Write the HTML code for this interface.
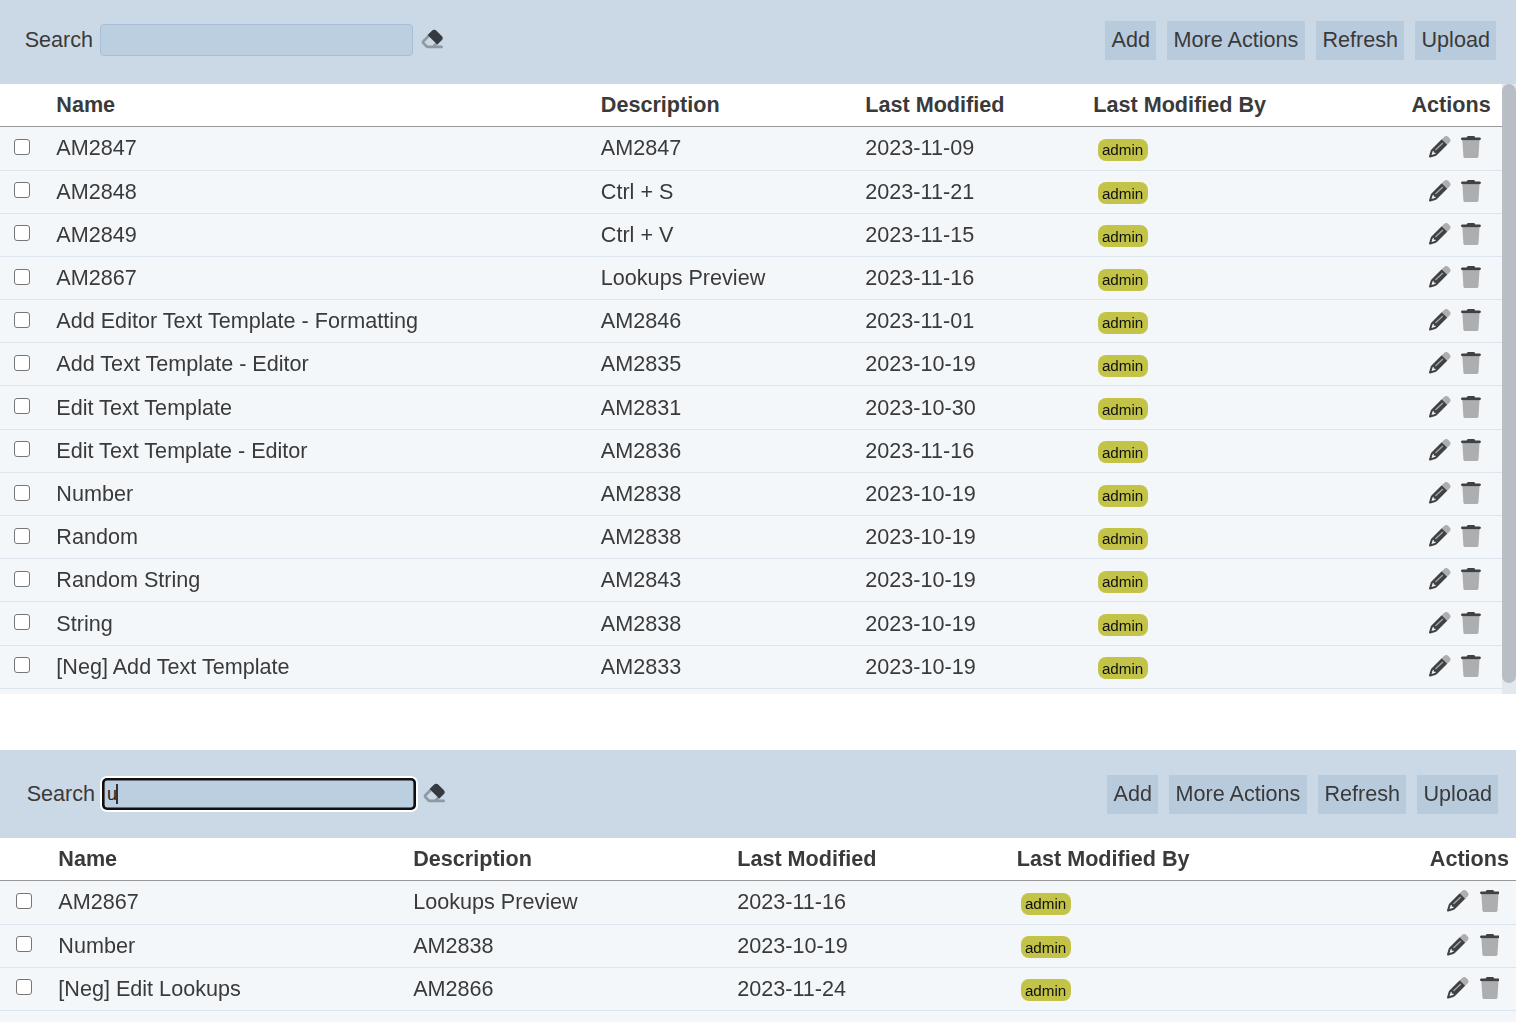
<!DOCTYPE html>
<html><head><meta charset="utf-8"><title>Templates</title>
<style>
html,body{margin:0;padding:0;}
body{width:1516px;height:1022px;overflow:hidden;position:relative;background:#fff;font-family:"Liberation Sans",sans-serif;}
.t{position:absolute;white-space:nowrap;line-height:30px;}
</style></head><body>
<div id="p1"><div style="position:absolute;left:0px;top:0px;width:1516px;height:84px;background:#cbd9e6"></div><div class="t" style="left:24.70px;top:24.52px;font-size:21.6px;color:#3a3a3a;">Search</div><div style="position:absolute;left:100px;top:24px;width:313px;height:32px;box-sizing:border-box;background:#bccfe1;border:1px solid #a6bfd9;border-radius:4px"></div><svg viewBox="0 0 576 512" width="24.3" height="21.6" style="position:absolute;left:419.9px;top:28.2px">
<path fill="#343a40" fill-opacity="0.4" fill-rule="evenodd" d="M290.7 57.4L57.4 290.7c-25 25-25 65.5 0 90.5l80 80c12 12 28.3 18.7 45.3 18.7H288h9.4H512c17.7 0 32-14.3 32-32s-14.3-32-32-32H387.9L518.6 285.3c25-25 25-65.5 0-90.5L381.3 57.4c-25-25-65.5-25-90.5 0zM297.4 416H288l-105.4 0-80-80L227.3 211.3 364.7 348.7 297.4 416z"/>
<path fill="#343a40" d="M182 166L290.7 57.4C315.7 32.4 356.2 32.4 381.3 57.4L518.6 194.8C543.6 219.8 543.6 260.3 518.6 285.3L410 394Z"/>
</svg><div style="position:absolute;left:1105px;top:21px;width:51px;height:39px;background:#b8cbdd"></div><div class="t" style="left:1111.50px;top:24.52px;font-size:21.6px;color:#3a3a3a;">Add</div><div style="position:absolute;left:1167px;top:21px;width:138px;height:39px;background:#b8cbdd"></div><div class="t" style="left:1173.50px;top:24.52px;font-size:21.6px;color:#3a3a3a;">More Actions</div><div style="position:absolute;left:1316px;top:21px;width:88px;height:39px;background:#b8cbdd"></div><div class="t" style="left:1322.50px;top:24.52px;font-size:21.6px;color:#3a3a3a;">Refresh</div><div style="position:absolute;left:1415px;top:21px;width:81px;height:39px;background:#b8cbdd"></div><div class="t" style="left:1421.50px;top:24.52px;font-size:21.6px;color:#3a3a3a;">Upload</div><div style="position:absolute;left:0px;top:126px;width:1502px;height:1px;background:#999999"></div><div class="t" style="left:56.30px;top:89.52px;font-size:21.6px;font-weight:bold;color:#3a3a3a;">Name</div><div class="t" style="left:600.80px;top:89.52px;font-size:21.6px;font-weight:bold;color:#3a3a3a;">Description</div><div class="t" style="left:865.30px;top:89.52px;font-size:21.6px;font-weight:bold;color:#3a3a3a;">Last Modified</div><div class="t" style="left:1093.30px;top:89.52px;font-size:21.6px;font-weight:bold;color:#3a3a3a;">Last Modified By</div><div class="t" style="right:25.30px;top:89.52px;font-size:21.6px;font-weight:bold;color:#3a3a3a">Actions</div><div style="position:absolute;left:0;top:0;width:1516px;height:1022px;will-change:transform"><div style="position:absolute;left:0px;top:127px;width:1502px;height:43px;background:#f3f7fa"></div><div style="position:absolute;left:0px;top:170px;width:1502px;height:1px;background:#dde6ee"></div><div style="position:absolute;left:14px;top:138.90px;width:16px;height:16px;box-sizing:border-box;border:1.4px solid #767676;border-radius:3px;background:#fff"></div><div class="t" style="left:56.30px;top:132.52px;font-size:21.6px;color:#3a3a3a;">AM2847</div><div class="t" style="left:600.80px;top:132.52px;font-size:21.6px;color:#3a3a3a;">AM2847</div><div class="t" style="left:865.30px;top:132.52px;font-size:21.6px;color:#3a3a3a;">2023-11-09</div><div style="position:absolute;left:1098.0px;top:138.90px;width:50px;height:22px;border-radius:8px;background:#c3c447"></div><div class="t" style="left:1101.90px;top:134.73px;font-size:15.2px;color:#111;">admin</div><svg viewBox="0 0 512 512" width="21.6" height="21.6" style="position:absolute;left:1429.0px;top:136px">
<path fill="#404142" fill-rule="evenodd" d="M432 207L188.5 452.9c-10.4 10.4-23.3 18-37.4 22.2L30.8 510.5c-8.4 2.5-17.5 .2-23.7-6.1s-8.5-15.3-6.1-23.7L36.4 360.3c4.2-14.1 11.8-27 22.2-37.4L302 79Z M160 399.4l-9.1 22.7c-4 3.1-8.5 5.4-13.3 6.9L59.4 452l23-78.1c1.4-4.9 3.8-9.4 6.9-13.3l22.7-9.1v32c0 8.8 7.2 16 16 16h32z"/>
<path fill="#404142" fill-opacity="0.4" d="M362.7 18.7L302 79L432 207L492.6 148.6c25-25 25-65.5 0-90.5L453.3 18.7c-25-25-65.5-25-90.5 0z"/>
<path d="M328 166L152 332" stroke="#ffffff" stroke-opacity="0.55" stroke-width="30" stroke-linecap="butt"/>
</svg><svg viewBox="0 0 448 512" width="19.9" height="22.1" preserveAspectRatio="none" style="position:absolute;left:1461.3px;top:136px">
<path fill="#404142" d="M163.8 0H284.2c12.1 0 23.2 6.8 28.6 17.7L320 32h96c17.7 0 32 14.3 32 32s-14.3 32-32 32H32C14.3 96 0 81.7 0 64S14.3 32 32 32h96l7.2-14.3C140.6 6.8 151.7 0 163.8 0z"/>
<path fill="#404142" fill-opacity="0.4" d="M32 96H416L394.8 467c-1.6 25.3-22.6 45-47.9 45H101.1c-25.3 0-46.3-19.7-47.9-45L32 96z"/>
</svg><div style="position:absolute;left:0px;top:171px;width:1502px;height:42px;background:#f3f7fa"></div><div style="position:absolute;left:0px;top:213px;width:1502px;height:1px;background:#dde6ee"></div><div style="position:absolute;left:14px;top:182.10px;width:16px;height:16px;box-sizing:border-box;border:1.4px solid #767676;border-radius:3px;background:#fff"></div><div class="t" style="left:56.30px;top:176.52px;font-size:21.6px;color:#3a3a3a;">AM2848</div><div class="t" style="left:600.80px;top:176.52px;font-size:21.6px;color:#3a3a3a;">Ctrl + S</div><div class="t" style="left:865.30px;top:176.52px;font-size:21.6px;color:#3a3a3a;">2023-11-21</div><div style="position:absolute;left:1098.0px;top:182.10px;width:50px;height:22px;border-radius:8px;background:#c3c447"></div><div class="t" style="left:1101.90px;top:178.73px;font-size:15.2px;color:#111;">admin</div><svg viewBox="0 0 512 512" width="21.6" height="21.6" style="position:absolute;left:1429.0px;top:180px">
<path fill="#404142" fill-rule="evenodd" d="M432 207L188.5 452.9c-10.4 10.4-23.3 18-37.4 22.2L30.8 510.5c-8.4 2.5-17.5 .2-23.7-6.1s-8.5-15.3-6.1-23.7L36.4 360.3c4.2-14.1 11.8-27 22.2-37.4L302 79Z M160 399.4l-9.1 22.7c-4 3.1-8.5 5.4-13.3 6.9L59.4 452l23-78.1c1.4-4.9 3.8-9.4 6.9-13.3l22.7-9.1v32c0 8.8 7.2 16 16 16h32z"/>
<path fill="#404142" fill-opacity="0.4" d="M362.7 18.7L302 79L432 207L492.6 148.6c25-25 25-65.5 0-90.5L453.3 18.7c-25-25-65.5-25-90.5 0z"/>
<path d="M328 166L152 332" stroke="#ffffff" stroke-opacity="0.55" stroke-width="30" stroke-linecap="butt"/>
</svg><svg viewBox="0 0 448 512" width="19.9" height="22.1" preserveAspectRatio="none" style="position:absolute;left:1461.3px;top:180px">
<path fill="#404142" d="M163.8 0H284.2c12.1 0 23.2 6.8 28.6 17.7L320 32h96c17.7 0 32 14.3 32 32s-14.3 32-32 32H32C14.3 96 0 81.7 0 64S14.3 32 32 32h96l7.2-14.3C140.6 6.8 151.7 0 163.8 0z"/>
<path fill="#404142" fill-opacity="0.4" d="M32 96H416L394.8 467c-1.6 25.3-22.6 45-47.9 45H101.1c-25.3 0-46.3-19.7-47.9-45L32 96z"/>
</svg><div style="position:absolute;left:0px;top:214px;width:1502px;height:42px;background:#f3f7fa"></div><div style="position:absolute;left:0px;top:256px;width:1502px;height:1px;background:#dde6ee"></div><div style="position:absolute;left:14px;top:225.30px;width:16px;height:16px;box-sizing:border-box;border:1.4px solid #767676;border-radius:3px;background:#fff"></div><div class="t" style="left:56.30px;top:219.52px;font-size:21.6px;color:#3a3a3a;">AM2849</div><div class="t" style="left:600.80px;top:219.52px;font-size:21.6px;color:#3a3a3a;">Ctrl + V</div><div class="t" style="left:865.30px;top:219.52px;font-size:21.6px;color:#3a3a3a;">2023-11-15</div><div style="position:absolute;left:1098.0px;top:225.30px;width:50px;height:22px;border-radius:8px;background:#c3c447"></div><div class="t" style="left:1101.90px;top:221.73px;font-size:15.2px;color:#111;">admin</div><svg viewBox="0 0 512 512" width="21.6" height="21.6" style="position:absolute;left:1429.0px;top:223px">
<path fill="#404142" fill-rule="evenodd" d="M432 207L188.5 452.9c-10.4 10.4-23.3 18-37.4 22.2L30.8 510.5c-8.4 2.5-17.5 .2-23.7-6.1s-8.5-15.3-6.1-23.7L36.4 360.3c4.2-14.1 11.8-27 22.2-37.4L302 79Z M160 399.4l-9.1 22.7c-4 3.1-8.5 5.4-13.3 6.9L59.4 452l23-78.1c1.4-4.9 3.8-9.4 6.9-13.3l22.7-9.1v32c0 8.8 7.2 16 16 16h32z"/>
<path fill="#404142" fill-opacity="0.4" d="M362.7 18.7L302 79L432 207L492.6 148.6c25-25 25-65.5 0-90.5L453.3 18.7c-25-25-65.5-25-90.5 0z"/>
<path d="M328 166L152 332" stroke="#ffffff" stroke-opacity="0.55" stroke-width="30" stroke-linecap="butt"/>
</svg><svg viewBox="0 0 448 512" width="19.9" height="22.1" preserveAspectRatio="none" style="position:absolute;left:1461.3px;top:223px">
<path fill="#404142" d="M163.8 0H284.2c12.1 0 23.2 6.8 28.6 17.7L320 32h96c17.7 0 32 14.3 32 32s-14.3 32-32 32H32C14.3 96 0 81.7 0 64S14.3 32 32 32h96l7.2-14.3C140.6 6.8 151.7 0 163.8 0z"/>
<path fill="#404142" fill-opacity="0.4" d="M32 96H416L394.8 467c-1.6 25.3-22.6 45-47.9 45H101.1c-25.3 0-46.3-19.7-47.9-45L32 96z"/>
</svg><div style="position:absolute;left:0px;top:257px;width:1502px;height:42px;background:#f3f7fa"></div><div style="position:absolute;left:0px;top:299px;width:1502px;height:1px;background:#dde6ee"></div><div style="position:absolute;left:14px;top:268.50px;width:16px;height:16px;box-sizing:border-box;border:1.4px solid #767676;border-radius:3px;background:#fff"></div><div class="t" style="left:56.30px;top:262.52px;font-size:21.6px;color:#3a3a3a;">AM2867</div><div class="t" style="left:600.80px;top:262.52px;font-size:21.6px;color:#3a3a3a;">Lookups Preview</div><div class="t" style="left:865.30px;top:262.52px;font-size:21.6px;color:#3a3a3a;">2023-11-16</div><div style="position:absolute;left:1098.0px;top:268.50px;width:50px;height:22px;border-radius:8px;background:#c3c447"></div><div class="t" style="left:1101.90px;top:264.73px;font-size:15.2px;color:#111;">admin</div><svg viewBox="0 0 512 512" width="21.6" height="21.6" style="position:absolute;left:1429.0px;top:266px">
<path fill="#404142" fill-rule="evenodd" d="M432 207L188.5 452.9c-10.4 10.4-23.3 18-37.4 22.2L30.8 510.5c-8.4 2.5-17.5 .2-23.7-6.1s-8.5-15.3-6.1-23.7L36.4 360.3c4.2-14.1 11.8-27 22.2-37.4L302 79Z M160 399.4l-9.1 22.7c-4 3.1-8.5 5.4-13.3 6.9L59.4 452l23-78.1c1.4-4.9 3.8-9.4 6.9-13.3l22.7-9.1v32c0 8.8 7.2 16 16 16h32z"/>
<path fill="#404142" fill-opacity="0.4" d="M362.7 18.7L302 79L432 207L492.6 148.6c25-25 25-65.5 0-90.5L453.3 18.7c-25-25-65.5-25-90.5 0z"/>
<path d="M328 166L152 332" stroke="#ffffff" stroke-opacity="0.55" stroke-width="30" stroke-linecap="butt"/>
</svg><svg viewBox="0 0 448 512" width="19.9" height="22.1" preserveAspectRatio="none" style="position:absolute;left:1461.3px;top:266px">
<path fill="#404142" d="M163.8 0H284.2c12.1 0 23.2 6.8 28.6 17.7L320 32h96c17.7 0 32 14.3 32 32s-14.3 32-32 32H32C14.3 96 0 81.7 0 64S14.3 32 32 32h96l7.2-14.3C140.6 6.8 151.7 0 163.8 0z"/>
<path fill="#404142" fill-opacity="0.4" d="M32 96H416L394.8 467c-1.6 25.3-22.6 45-47.9 45H101.1c-25.3 0-46.3-19.7-47.9-45L32 96z"/>
</svg><div style="position:absolute;left:0px;top:300px;width:1502px;height:42px;background:#f3f7fa"></div><div style="position:absolute;left:0px;top:342px;width:1502px;height:1px;background:#dde6ee"></div><div style="position:absolute;left:14px;top:311.70px;width:16px;height:16px;box-sizing:border-box;border:1.4px solid #767676;border-radius:3px;background:#fff"></div><div class="t" style="left:56.30px;top:305.52px;font-size:21.6px;color:#3a3a3a;">Add Editor Text Template - Formatting</div><div class="t" style="left:600.80px;top:305.52px;font-size:21.6px;color:#3a3a3a;">AM2846</div><div class="t" style="left:865.30px;top:305.52px;font-size:21.6px;color:#3a3a3a;">2023-11-01</div><div style="position:absolute;left:1098.0px;top:311.70px;width:50px;height:22px;border-radius:8px;background:#c3c447"></div><div class="t" style="left:1101.90px;top:307.73px;font-size:15.2px;color:#111;">admin</div><svg viewBox="0 0 512 512" width="21.6" height="21.6" style="position:absolute;left:1429.0px;top:309px">
<path fill="#404142" fill-rule="evenodd" d="M432 207L188.5 452.9c-10.4 10.4-23.3 18-37.4 22.2L30.8 510.5c-8.4 2.5-17.5 .2-23.7-6.1s-8.5-15.3-6.1-23.7L36.4 360.3c4.2-14.1 11.8-27 22.2-37.4L302 79Z M160 399.4l-9.1 22.7c-4 3.1-8.5 5.4-13.3 6.9L59.4 452l23-78.1c1.4-4.9 3.8-9.4 6.9-13.3l22.7-9.1v32c0 8.8 7.2 16 16 16h32z"/>
<path fill="#404142" fill-opacity="0.4" d="M362.7 18.7L302 79L432 207L492.6 148.6c25-25 25-65.5 0-90.5L453.3 18.7c-25-25-65.5-25-90.5 0z"/>
<path d="M328 166L152 332" stroke="#ffffff" stroke-opacity="0.55" stroke-width="30" stroke-linecap="butt"/>
</svg><svg viewBox="0 0 448 512" width="19.9" height="22.1" preserveAspectRatio="none" style="position:absolute;left:1461.3px;top:309px">
<path fill="#404142" d="M163.8 0H284.2c12.1 0 23.2 6.8 28.6 17.7L320 32h96c17.7 0 32 14.3 32 32s-14.3 32-32 32H32C14.3 96 0 81.7 0 64S14.3 32 32 32h96l7.2-14.3C140.6 6.8 151.7 0 163.8 0z"/>
<path fill="#404142" fill-opacity="0.4" d="M32 96H416L394.8 467c-1.6 25.3-22.6 45-47.9 45H101.1c-25.3 0-46.3-19.7-47.9-45L32 96z"/>
</svg><div style="position:absolute;left:0px;top:343px;width:1502px;height:42px;background:#f3f7fa"></div><div style="position:absolute;left:0px;top:385px;width:1502px;height:1px;background:#dde6ee"></div><div style="position:absolute;left:14px;top:354.90px;width:16px;height:16px;box-sizing:border-box;border:1.4px solid #767676;border-radius:3px;background:#fff"></div><div class="t" style="left:56.30px;top:348.52px;font-size:21.6px;color:#3a3a3a;">Add Text Template - Editor</div><div class="t" style="left:600.80px;top:348.52px;font-size:21.6px;color:#3a3a3a;">AM2835</div><div class="t" style="left:865.30px;top:348.52px;font-size:21.6px;color:#3a3a3a;">2023-10-19</div><div style="position:absolute;left:1098.0px;top:354.90px;width:50px;height:22px;border-radius:8px;background:#c3c447"></div><div class="t" style="left:1101.90px;top:350.73px;font-size:15.2px;color:#111;">admin</div><svg viewBox="0 0 512 512" width="21.6" height="21.6" style="position:absolute;left:1429.0px;top:352px">
<path fill="#404142" fill-rule="evenodd" d="M432 207L188.5 452.9c-10.4 10.4-23.3 18-37.4 22.2L30.8 510.5c-8.4 2.5-17.5 .2-23.7-6.1s-8.5-15.3-6.1-23.7L36.4 360.3c4.2-14.1 11.8-27 22.2-37.4L302 79Z M160 399.4l-9.1 22.7c-4 3.1-8.5 5.4-13.3 6.9L59.4 452l23-78.1c1.4-4.9 3.8-9.4 6.9-13.3l22.7-9.1v32c0 8.8 7.2 16 16 16h32z"/>
<path fill="#404142" fill-opacity="0.4" d="M362.7 18.7L302 79L432 207L492.6 148.6c25-25 25-65.5 0-90.5L453.3 18.7c-25-25-65.5-25-90.5 0z"/>
<path d="M328 166L152 332" stroke="#ffffff" stroke-opacity="0.55" stroke-width="30" stroke-linecap="butt"/>
</svg><svg viewBox="0 0 448 512" width="19.9" height="22.1" preserveAspectRatio="none" style="position:absolute;left:1461.3px;top:352px">
<path fill="#404142" d="M163.8 0H284.2c12.1 0 23.2 6.8 28.6 17.7L320 32h96c17.7 0 32 14.3 32 32s-14.3 32-32 32H32C14.3 96 0 81.7 0 64S14.3 32 32 32h96l7.2-14.3C140.6 6.8 151.7 0 163.8 0z"/>
<path fill="#404142" fill-opacity="0.4" d="M32 96H416L394.8 467c-1.6 25.3-22.6 45-47.9 45H101.1c-25.3 0-46.3-19.7-47.9-45L32 96z"/>
</svg><div style="position:absolute;left:0px;top:386px;width:1502px;height:43px;background:#f3f7fa"></div><div style="position:absolute;left:0px;top:429px;width:1502px;height:1px;background:#dde6ee"></div><div style="position:absolute;left:14px;top:398.10px;width:16px;height:16px;box-sizing:border-box;border:1.4px solid #767676;border-radius:3px;background:#fff"></div><div class="t" style="left:56.30px;top:392.52px;font-size:21.6px;color:#3a3a3a;">Edit Text Template</div><div class="t" style="left:600.80px;top:392.52px;font-size:21.6px;color:#3a3a3a;">AM2831</div><div class="t" style="left:865.30px;top:392.52px;font-size:21.6px;color:#3a3a3a;">2023-10-30</div><div style="position:absolute;left:1098.0px;top:398.10px;width:50px;height:22px;border-radius:8px;background:#c3c447"></div><div class="t" style="left:1101.90px;top:394.73px;font-size:15.2px;color:#111;">admin</div><svg viewBox="0 0 512 512" width="21.6" height="21.6" style="position:absolute;left:1429.0px;top:396px">
<path fill="#404142" fill-rule="evenodd" d="M432 207L188.5 452.9c-10.4 10.4-23.3 18-37.4 22.2L30.8 510.5c-8.4 2.5-17.5 .2-23.7-6.1s-8.5-15.3-6.1-23.7L36.4 360.3c4.2-14.1 11.8-27 22.2-37.4L302 79Z M160 399.4l-9.1 22.7c-4 3.1-8.5 5.4-13.3 6.9L59.4 452l23-78.1c1.4-4.9 3.8-9.4 6.9-13.3l22.7-9.1v32c0 8.8 7.2 16 16 16h32z"/>
<path fill="#404142" fill-opacity="0.4" d="M362.7 18.7L302 79L432 207L492.6 148.6c25-25 25-65.5 0-90.5L453.3 18.7c-25-25-65.5-25-90.5 0z"/>
<path d="M328 166L152 332" stroke="#ffffff" stroke-opacity="0.55" stroke-width="30" stroke-linecap="butt"/>
</svg><svg viewBox="0 0 448 512" width="19.9" height="22.1" preserveAspectRatio="none" style="position:absolute;left:1461.3px;top:396px">
<path fill="#404142" d="M163.8 0H284.2c12.1 0 23.2 6.8 28.6 17.7L320 32h96c17.7 0 32 14.3 32 32s-14.3 32-32 32H32C14.3 96 0 81.7 0 64S14.3 32 32 32h96l7.2-14.3C140.6 6.8 151.7 0 163.8 0z"/>
<path fill="#404142" fill-opacity="0.4" d="M32 96H416L394.8 467c-1.6 25.3-22.6 45-47.9 45H101.1c-25.3 0-46.3-19.7-47.9-45L32 96z"/>
</svg><div style="position:absolute;left:0px;top:430px;width:1502px;height:42px;background:#f3f7fa"></div><div style="position:absolute;left:0px;top:472px;width:1502px;height:1px;background:#dde6ee"></div><div style="position:absolute;left:14px;top:441.30px;width:16px;height:16px;box-sizing:border-box;border:1.4px solid #767676;border-radius:3px;background:#fff"></div><div class="t" style="left:56.30px;top:435.52px;font-size:21.6px;color:#3a3a3a;">Edit Text Template - Editor</div><div class="t" style="left:600.80px;top:435.52px;font-size:21.6px;color:#3a3a3a;">AM2836</div><div class="t" style="left:865.30px;top:435.52px;font-size:21.6px;color:#3a3a3a;">2023-11-16</div><div style="position:absolute;left:1098.0px;top:441.30px;width:50px;height:22px;border-radius:8px;background:#c3c447"></div><div class="t" style="left:1101.90px;top:437.73px;font-size:15.2px;color:#111;">admin</div><svg viewBox="0 0 512 512" width="21.6" height="21.6" style="position:absolute;left:1429.0px;top:439px">
<path fill="#404142" fill-rule="evenodd" d="M432 207L188.5 452.9c-10.4 10.4-23.3 18-37.4 22.2L30.8 510.5c-8.4 2.5-17.5 .2-23.7-6.1s-8.5-15.3-6.1-23.7L36.4 360.3c4.2-14.1 11.8-27 22.2-37.4L302 79Z M160 399.4l-9.1 22.7c-4 3.1-8.5 5.4-13.3 6.9L59.4 452l23-78.1c1.4-4.9 3.8-9.4 6.9-13.3l22.7-9.1v32c0 8.8 7.2 16 16 16h32z"/>
<path fill="#404142" fill-opacity="0.4" d="M362.7 18.7L302 79L432 207L492.6 148.6c25-25 25-65.5 0-90.5L453.3 18.7c-25-25-65.5-25-90.5 0z"/>
<path d="M328 166L152 332" stroke="#ffffff" stroke-opacity="0.55" stroke-width="30" stroke-linecap="butt"/>
</svg><svg viewBox="0 0 448 512" width="19.9" height="22.1" preserveAspectRatio="none" style="position:absolute;left:1461.3px;top:439px">
<path fill="#404142" d="M163.8 0H284.2c12.1 0 23.2 6.8 28.6 17.7L320 32h96c17.7 0 32 14.3 32 32s-14.3 32-32 32H32C14.3 96 0 81.7 0 64S14.3 32 32 32h96l7.2-14.3C140.6 6.8 151.7 0 163.8 0z"/>
<path fill="#404142" fill-opacity="0.4" d="M32 96H416L394.8 467c-1.6 25.3-22.6 45-47.9 45H101.1c-25.3 0-46.3-19.7-47.9-45L32 96z"/>
</svg><div style="position:absolute;left:0px;top:473px;width:1502px;height:42px;background:#f3f7fa"></div><div style="position:absolute;left:0px;top:515px;width:1502px;height:1px;background:#dde6ee"></div><div style="position:absolute;left:14px;top:484.50px;width:16px;height:16px;box-sizing:border-box;border:1.4px solid #767676;border-radius:3px;background:#fff"></div><div class="t" style="left:56.30px;top:478.52px;font-size:21.6px;color:#3a3a3a;">Number</div><div class="t" style="left:600.80px;top:478.52px;font-size:21.6px;color:#3a3a3a;">AM2838</div><div class="t" style="left:865.30px;top:478.52px;font-size:21.6px;color:#3a3a3a;">2023-10-19</div><div style="position:absolute;left:1098.0px;top:484.50px;width:50px;height:22px;border-radius:8px;background:#c3c447"></div><div class="t" style="left:1101.90px;top:480.73px;font-size:15.2px;color:#111;">admin</div><svg viewBox="0 0 512 512" width="21.6" height="21.6" style="position:absolute;left:1429.0px;top:482px">
<path fill="#404142" fill-rule="evenodd" d="M432 207L188.5 452.9c-10.4 10.4-23.3 18-37.4 22.2L30.8 510.5c-8.4 2.5-17.5 .2-23.7-6.1s-8.5-15.3-6.1-23.7L36.4 360.3c4.2-14.1 11.8-27 22.2-37.4L302 79Z M160 399.4l-9.1 22.7c-4 3.1-8.5 5.4-13.3 6.9L59.4 452l23-78.1c1.4-4.9 3.8-9.4 6.9-13.3l22.7-9.1v32c0 8.8 7.2 16 16 16h32z"/>
<path fill="#404142" fill-opacity="0.4" d="M362.7 18.7L302 79L432 207L492.6 148.6c25-25 25-65.5 0-90.5L453.3 18.7c-25-25-65.5-25-90.5 0z"/>
<path d="M328 166L152 332" stroke="#ffffff" stroke-opacity="0.55" stroke-width="30" stroke-linecap="butt"/>
</svg><svg viewBox="0 0 448 512" width="19.9" height="22.1" preserveAspectRatio="none" style="position:absolute;left:1461.3px;top:482px">
<path fill="#404142" d="M163.8 0H284.2c12.1 0 23.2 6.8 28.6 17.7L320 32h96c17.7 0 32 14.3 32 32s-14.3 32-32 32H32C14.3 96 0 81.7 0 64S14.3 32 32 32h96l7.2-14.3C140.6 6.8 151.7 0 163.8 0z"/>
<path fill="#404142" fill-opacity="0.4" d="M32 96H416L394.8 467c-1.6 25.3-22.6 45-47.9 45H101.1c-25.3 0-46.3-19.7-47.9-45L32 96z"/>
</svg><div style="position:absolute;left:0px;top:516px;width:1502px;height:42px;background:#f3f7fa"></div><div style="position:absolute;left:0px;top:558px;width:1502px;height:1px;background:#dde6ee"></div><div style="position:absolute;left:14px;top:527.70px;width:16px;height:16px;box-sizing:border-box;border:1.4px solid #767676;border-radius:3px;background:#fff"></div><div class="t" style="left:56.30px;top:521.52px;font-size:21.6px;color:#3a3a3a;">Random</div><div class="t" style="left:600.80px;top:521.52px;font-size:21.6px;color:#3a3a3a;">AM2838</div><div class="t" style="left:865.30px;top:521.52px;font-size:21.6px;color:#3a3a3a;">2023-10-19</div><div style="position:absolute;left:1098.0px;top:527.70px;width:50px;height:22px;border-radius:8px;background:#c3c447"></div><div class="t" style="left:1101.90px;top:523.73px;font-size:15.2px;color:#111;">admin</div><svg viewBox="0 0 512 512" width="21.6" height="21.6" style="position:absolute;left:1429.0px;top:525px">
<path fill="#404142" fill-rule="evenodd" d="M432 207L188.5 452.9c-10.4 10.4-23.3 18-37.4 22.2L30.8 510.5c-8.4 2.5-17.5 .2-23.7-6.1s-8.5-15.3-6.1-23.7L36.4 360.3c4.2-14.1 11.8-27 22.2-37.4L302 79Z M160 399.4l-9.1 22.7c-4 3.1-8.5 5.4-13.3 6.9L59.4 452l23-78.1c1.4-4.9 3.8-9.4 6.9-13.3l22.7-9.1v32c0 8.8 7.2 16 16 16h32z"/>
<path fill="#404142" fill-opacity="0.4" d="M362.7 18.7L302 79L432 207L492.6 148.6c25-25 25-65.5 0-90.5L453.3 18.7c-25-25-65.5-25-90.5 0z"/>
<path d="M328 166L152 332" stroke="#ffffff" stroke-opacity="0.55" stroke-width="30" stroke-linecap="butt"/>
</svg><svg viewBox="0 0 448 512" width="19.9" height="22.1" preserveAspectRatio="none" style="position:absolute;left:1461.3px;top:525px">
<path fill="#404142" d="M163.8 0H284.2c12.1 0 23.2 6.8 28.6 17.7L320 32h96c17.7 0 32 14.3 32 32s-14.3 32-32 32H32C14.3 96 0 81.7 0 64S14.3 32 32 32h96l7.2-14.3C140.6 6.8 151.7 0 163.8 0z"/>
<path fill="#404142" fill-opacity="0.4" d="M32 96H416L394.8 467c-1.6 25.3-22.6 45-47.9 45H101.1c-25.3 0-46.3-19.7-47.9-45L32 96z"/>
</svg><div style="position:absolute;left:0px;top:559px;width:1502px;height:42px;background:#f3f7fa"></div><div style="position:absolute;left:0px;top:601px;width:1502px;height:1px;background:#dde6ee"></div><div style="position:absolute;left:14px;top:570.90px;width:16px;height:16px;box-sizing:border-box;border:1.4px solid #767676;border-radius:3px;background:#fff"></div><div class="t" style="left:56.30px;top:564.52px;font-size:21.6px;color:#3a3a3a;">Random String</div><div class="t" style="left:600.80px;top:564.52px;font-size:21.6px;color:#3a3a3a;">AM2843</div><div class="t" style="left:865.30px;top:564.52px;font-size:21.6px;color:#3a3a3a;">2023-10-19</div><div style="position:absolute;left:1098.0px;top:570.90px;width:50px;height:22px;border-radius:8px;background:#c3c447"></div><div class="t" style="left:1101.90px;top:566.73px;font-size:15.2px;color:#111;">admin</div><svg viewBox="0 0 512 512" width="21.6" height="21.6" style="position:absolute;left:1429.0px;top:568px">
<path fill="#404142" fill-rule="evenodd" d="M432 207L188.5 452.9c-10.4 10.4-23.3 18-37.4 22.2L30.8 510.5c-8.4 2.5-17.5 .2-23.7-6.1s-8.5-15.3-6.1-23.7L36.4 360.3c4.2-14.1 11.8-27 22.2-37.4L302 79Z M160 399.4l-9.1 22.7c-4 3.1-8.5 5.4-13.3 6.9L59.4 452l23-78.1c1.4-4.9 3.8-9.4 6.9-13.3l22.7-9.1v32c0 8.8 7.2 16 16 16h32z"/>
<path fill="#404142" fill-opacity="0.4" d="M362.7 18.7L302 79L432 207L492.6 148.6c25-25 25-65.5 0-90.5L453.3 18.7c-25-25-65.5-25-90.5 0z"/>
<path d="M328 166L152 332" stroke="#ffffff" stroke-opacity="0.55" stroke-width="30" stroke-linecap="butt"/>
</svg><svg viewBox="0 0 448 512" width="19.9" height="22.1" preserveAspectRatio="none" style="position:absolute;left:1461.3px;top:568px">
<path fill="#404142" d="M163.8 0H284.2c12.1 0 23.2 6.8 28.6 17.7L320 32h96c17.7 0 32 14.3 32 32s-14.3 32-32 32H32C14.3 96 0 81.7 0 64S14.3 32 32 32h96l7.2-14.3C140.6 6.8 151.7 0 163.8 0z"/>
<path fill="#404142" fill-opacity="0.4" d="M32 96H416L394.8 467c-1.6 25.3-22.6 45-47.9 45H101.1c-25.3 0-46.3-19.7-47.9-45L32 96z"/>
</svg><div style="position:absolute;left:0px;top:602px;width:1502px;height:43px;background:#f3f7fa"></div><div style="position:absolute;left:0px;top:645px;width:1502px;height:1px;background:#dde6ee"></div><div style="position:absolute;left:14px;top:614.10px;width:16px;height:16px;box-sizing:border-box;border:1.4px solid #767676;border-radius:3px;background:#fff"></div><div class="t" style="left:56.30px;top:608.52px;font-size:21.6px;color:#3a3a3a;">String</div><div class="t" style="left:600.80px;top:608.52px;font-size:21.6px;color:#3a3a3a;">AM2838</div><div class="t" style="left:865.30px;top:608.52px;font-size:21.6px;color:#3a3a3a;">2023-10-19</div><div style="position:absolute;left:1098.0px;top:614.10px;width:50px;height:22px;border-radius:8px;background:#c3c447"></div><div class="t" style="left:1101.90px;top:610.73px;font-size:15.2px;color:#111;">admin</div><svg viewBox="0 0 512 512" width="21.6" height="21.6" style="position:absolute;left:1429.0px;top:612px">
<path fill="#404142" fill-rule="evenodd" d="M432 207L188.5 452.9c-10.4 10.4-23.3 18-37.4 22.2L30.8 510.5c-8.4 2.5-17.5 .2-23.7-6.1s-8.5-15.3-6.1-23.7L36.4 360.3c4.2-14.1 11.8-27 22.2-37.4L302 79Z M160 399.4l-9.1 22.7c-4 3.1-8.5 5.4-13.3 6.9L59.4 452l23-78.1c1.4-4.9 3.8-9.4 6.9-13.3l22.7-9.1v32c0 8.8 7.2 16 16 16h32z"/>
<path fill="#404142" fill-opacity="0.4" d="M362.7 18.7L302 79L432 207L492.6 148.6c25-25 25-65.5 0-90.5L453.3 18.7c-25-25-65.5-25-90.5 0z"/>
<path d="M328 166L152 332" stroke="#ffffff" stroke-opacity="0.55" stroke-width="30" stroke-linecap="butt"/>
</svg><svg viewBox="0 0 448 512" width="19.9" height="22.1" preserveAspectRatio="none" style="position:absolute;left:1461.3px;top:612px">
<path fill="#404142" d="M163.8 0H284.2c12.1 0 23.2 6.8 28.6 17.7L320 32h96c17.7 0 32 14.3 32 32s-14.3 32-32 32H32C14.3 96 0 81.7 0 64S14.3 32 32 32h96l7.2-14.3C140.6 6.8 151.7 0 163.8 0z"/>
<path fill="#404142" fill-opacity="0.4" d="M32 96H416L394.8 467c-1.6 25.3-22.6 45-47.9 45H101.1c-25.3 0-46.3-19.7-47.9-45L32 96z"/>
</svg><div style="position:absolute;left:0px;top:646px;width:1502px;height:42px;background:#f3f7fa"></div><div style="position:absolute;left:0px;top:688px;width:1502px;height:1px;background:#dde6ee"></div><div style="position:absolute;left:14px;top:657.30px;width:16px;height:16px;box-sizing:border-box;border:1.4px solid #767676;border-radius:3px;background:#fff"></div><div class="t" style="left:56.30px;top:651.52px;font-size:21.6px;color:#3a3a3a;">[Neg] Add Text Template</div><div class="t" style="left:600.80px;top:651.52px;font-size:21.6px;color:#3a3a3a;">AM2833</div><div class="t" style="left:865.30px;top:651.52px;font-size:21.6px;color:#3a3a3a;">2023-10-19</div><div style="position:absolute;left:1098.0px;top:657.30px;width:50px;height:22px;border-radius:8px;background:#c3c447"></div><div class="t" style="left:1101.90px;top:653.73px;font-size:15.2px;color:#111;">admin</div><svg viewBox="0 0 512 512" width="21.6" height="21.6" style="position:absolute;left:1429.0px;top:655px">
<path fill="#404142" fill-rule="evenodd" d="M432 207L188.5 452.9c-10.4 10.4-23.3 18-37.4 22.2L30.8 510.5c-8.4 2.5-17.5 .2-23.7-6.1s-8.5-15.3-6.1-23.7L36.4 360.3c4.2-14.1 11.8-27 22.2-37.4L302 79Z M160 399.4l-9.1 22.7c-4 3.1-8.5 5.4-13.3 6.9L59.4 452l23-78.1c1.4-4.9 3.8-9.4 6.9-13.3l22.7-9.1v32c0 8.8 7.2 16 16 16h32z"/>
<path fill="#404142" fill-opacity="0.4" d="M362.7 18.7L302 79L432 207L492.6 148.6c25-25 25-65.5 0-90.5L453.3 18.7c-25-25-65.5-25-90.5 0z"/>
<path d="M328 166L152 332" stroke="#ffffff" stroke-opacity="0.55" stroke-width="30" stroke-linecap="butt"/>
</svg><svg viewBox="0 0 448 512" width="19.9" height="22.1" preserveAspectRatio="none" style="position:absolute;left:1461.3px;top:655px">
<path fill="#404142" d="M163.8 0H284.2c12.1 0 23.2 6.8 28.6 17.7L320 32h96c17.7 0 32 14.3 32 32s-14.3 32-32 32H32C14.3 96 0 81.7 0 64S14.3 32 32 32h96l7.2-14.3C140.6 6.8 151.7 0 163.8 0z"/>
<path fill="#404142" fill-opacity="0.4" d="M32 96H416L394.8 467c-1.6 25.3-22.6 45-47.9 45H101.1c-25.3 0-46.3-19.7-47.9-45L32 96z"/>
</svg><div style="position:absolute;left:0px;top:689px;width:1502px;height:5px;background:#f3f7fa"></div></div><div style="position:absolute;left:1502px;top:84px;width:14px;height:610px;background:#e1e8ef"></div><div style="position:absolute;left:1502px;top:84px;width:14px;height:599px;background:#b9bec6;border-radius:7px"></div></div><div id="p2"><div style="position:absolute;left:0px;top:750px;width:1516px;height:88px;background:#cbd9e6"></div><div class="t" style="left:26.70px;top:778.52px;font-size:21.6px;color:#3a3a3a;">Search</div><div style="position:absolute;left:102px;top:778px;width:313.5px;height:32px;box-sizing:border-box;background:#bccfe1;border-radius:5px;box-shadow:inset 0 0 0 2.6px #101010, 0 0 0 2px #fff"></div><div class="t" style="left:107.00px;top:778.76px;font-size:18px;color:#222;">u</div><div style="position:absolute;left:116px;top:784px;width:2px;height:20px;background:#333"></div><svg viewBox="0 0 576 512" width="24.3" height="21.6" style="position:absolute;left:421.9px;top:782.2px">
<path fill="#343a40" fill-opacity="0.4" fill-rule="evenodd" d="M290.7 57.4L57.4 290.7c-25 25-25 65.5 0 90.5l80 80c12 12 28.3 18.7 45.3 18.7H288h9.4H512c17.7 0 32-14.3 32-32s-14.3-32-32-32H387.9L518.6 285.3c25-25 25-65.5 0-90.5L381.3 57.4c-25-25-65.5-25-90.5 0zM297.4 416H288l-105.4 0-80-80L227.3 211.3 364.7 348.7 297.4 416z"/>
<path fill="#343a40" d="M182 166L290.7 57.4C315.7 32.4 356.2 32.4 381.3 57.4L518.6 194.8C543.6 219.8 543.6 260.3 518.6 285.3L410 394Z"/>
</svg><div style="position:absolute;left:0;top:0;width:1516px;height:1022px;will-change:transform"><div style="position:absolute;left:1107px;top:775px;width:51px;height:39px;background:#b8cbdd"></div><div class="t" style="left:1113.50px;top:778.52px;font-size:21.6px;color:#3a3a3a;">Add</div><div style="position:absolute;left:1169px;top:775px;width:138px;height:39px;background:#b8cbdd"></div><div class="t" style="left:1175.50px;top:778.52px;font-size:21.6px;color:#3a3a3a;">More Actions</div><div style="position:absolute;left:1318px;top:775px;width:88px;height:39px;background:#b8cbdd"></div><div class="t" style="left:1324.50px;top:778.52px;font-size:21.6px;color:#3a3a3a;">Refresh</div><div style="position:absolute;left:1417px;top:775px;width:81px;height:39px;background:#b8cbdd"></div><div class="t" style="left:1423.50px;top:778.52px;font-size:21.6px;color:#3a3a3a;">Upload</div><div style="position:absolute;left:0px;top:880px;width:1516px;height:1px;background:#999999"></div><div class="t" style="left:58.30px;top:843.52px;font-size:21.6px;font-weight:bold;color:#3a3a3a;">Name</div><div class="t" style="left:413.20px;top:843.52px;font-size:21.6px;font-weight:bold;color:#3a3a3a;">Description</div><div class="t" style="left:737.20px;top:843.52px;font-size:21.6px;font-weight:bold;color:#3a3a3a;">Last Modified</div><div class="t" style="left:1016.80px;top:843.52px;font-size:21.6px;font-weight:bold;color:#3a3a3a;">Last Modified By</div><div class="t" style="right:7.00px;top:843.52px;font-size:21.6px;font-weight:bold;color:#3a3a3a">Actions</div><div style="position:absolute;left:0px;top:881px;width:1516px;height:43px;background:#f3f7fa"></div><div style="position:absolute;left:0px;top:924px;width:1516px;height:1px;background:#dde6ee"></div><div style="position:absolute;left:16px;top:892.90px;width:16px;height:16px;box-sizing:border-box;border:1.4px solid #767676;border-radius:3px;background:#fff"></div><div class="t" style="left:58.30px;top:886.52px;font-size:21.6px;color:#3a3a3a;">AM2867</div><div class="t" style="left:413.20px;top:886.52px;font-size:21.6px;color:#3a3a3a;">Lookups Preview</div><div class="t" style="left:737.20px;top:886.52px;font-size:21.6px;color:#3a3a3a;">2023-11-16</div><div style="position:absolute;left:1021.0px;top:892.90px;width:50px;height:22px;border-radius:8px;background:#c3c447"></div><div class="t" style="left:1024.90px;top:888.73px;font-size:15.2px;color:#111;">admin</div><svg viewBox="0 0 512 512" width="21.6" height="21.6" style="position:absolute;left:1447.3px;top:890px">
<path fill="#404142" fill-rule="evenodd" d="M432 207L188.5 452.9c-10.4 10.4-23.3 18-37.4 22.2L30.8 510.5c-8.4 2.5-17.5 .2-23.7-6.1s-8.5-15.3-6.1-23.7L36.4 360.3c4.2-14.1 11.8-27 22.2-37.4L302 79Z M160 399.4l-9.1 22.7c-4 3.1-8.5 5.4-13.3 6.9L59.4 452l23-78.1c1.4-4.9 3.8-9.4 6.9-13.3l22.7-9.1v32c0 8.8 7.2 16 16 16h32z"/>
<path fill="#404142" fill-opacity="0.4" d="M362.7 18.7L302 79L432 207L492.6 148.6c25-25 25-65.5 0-90.5L453.3 18.7c-25-25-65.5-25-90.5 0z"/>
<path d="M328 166L152 332" stroke="#ffffff" stroke-opacity="0.55" stroke-width="30" stroke-linecap="butt"/>
</svg><svg viewBox="0 0 448 512" width="19.9" height="22.1" preserveAspectRatio="none" style="position:absolute;left:1479.6px;top:890px">
<path fill="#404142" d="M163.8 0H284.2c12.1 0 23.2 6.8 28.6 17.7L320 32h96c17.7 0 32 14.3 32 32s-14.3 32-32 32H32C14.3 96 0 81.7 0 64S14.3 32 32 32h96l7.2-14.3C140.6 6.8 151.7 0 163.8 0z"/>
<path fill="#404142" fill-opacity="0.4" d="M32 96H416L394.8 467c-1.6 25.3-22.6 45-47.9 45H101.1c-25.3 0-46.3-19.7-47.9-45L32 96z"/>
</svg><div style="position:absolute;left:0px;top:925px;width:1516px;height:42px;background:#f3f7fa"></div><div style="position:absolute;left:0px;top:967px;width:1516px;height:1px;background:#dde6ee"></div><div style="position:absolute;left:16px;top:936.10px;width:16px;height:16px;box-sizing:border-box;border:1.4px solid #767676;border-radius:3px;background:#fff"></div><div class="t" style="left:58.30px;top:930.52px;font-size:21.6px;color:#3a3a3a;">Number</div><div class="t" style="left:413.20px;top:930.52px;font-size:21.6px;color:#3a3a3a;">AM2838</div><div class="t" style="left:737.20px;top:930.52px;font-size:21.6px;color:#3a3a3a;">2023-10-19</div><div style="position:absolute;left:1021.0px;top:936.10px;width:50px;height:22px;border-radius:8px;background:#c3c447"></div><div class="t" style="left:1024.90px;top:932.73px;font-size:15.2px;color:#111;">admin</div><svg viewBox="0 0 512 512" width="21.6" height="21.6" style="position:absolute;left:1447.3px;top:934px">
<path fill="#404142" fill-rule="evenodd" d="M432 207L188.5 452.9c-10.4 10.4-23.3 18-37.4 22.2L30.8 510.5c-8.4 2.5-17.5 .2-23.7-6.1s-8.5-15.3-6.1-23.7L36.4 360.3c4.2-14.1 11.8-27 22.2-37.4L302 79Z M160 399.4l-9.1 22.7c-4 3.1-8.5 5.4-13.3 6.9L59.4 452l23-78.1c1.4-4.9 3.8-9.4 6.9-13.3l22.7-9.1v32c0 8.8 7.2 16 16 16h32z"/>
<path fill="#404142" fill-opacity="0.4" d="M362.7 18.7L302 79L432 207L492.6 148.6c25-25 25-65.5 0-90.5L453.3 18.7c-25-25-65.5-25-90.5 0z"/>
<path d="M328 166L152 332" stroke="#ffffff" stroke-opacity="0.55" stroke-width="30" stroke-linecap="butt"/>
</svg><svg viewBox="0 0 448 512" width="19.9" height="22.1" preserveAspectRatio="none" style="position:absolute;left:1479.6px;top:934px">
<path fill="#404142" d="M163.8 0H284.2c12.1 0 23.2 6.8 28.6 17.7L320 32h96c17.7 0 32 14.3 32 32s-14.3 32-32 32H32C14.3 96 0 81.7 0 64S14.3 32 32 32h96l7.2-14.3C140.6 6.8 151.7 0 163.8 0z"/>
<path fill="#404142" fill-opacity="0.4" d="M32 96H416L394.8 467c-1.6 25.3-22.6 45-47.9 45H101.1c-25.3 0-46.3-19.7-47.9-45L32 96z"/>
</svg><div style="position:absolute;left:0px;top:968px;width:1516px;height:42px;background:#f3f7fa"></div><div style="position:absolute;left:0px;top:1010px;width:1516px;height:1px;background:#dde6ee"></div><div style="position:absolute;left:16px;top:979.30px;width:16px;height:16px;box-sizing:border-box;border:1.4px solid #767676;border-radius:3px;background:#fff"></div><div class="t" style="left:58.30px;top:973.52px;font-size:21.6px;color:#3a3a3a;">[Neg] Edit Lookups</div><div class="t" style="left:413.20px;top:973.52px;font-size:21.6px;color:#3a3a3a;">AM2866</div><div class="t" style="left:737.20px;top:973.52px;font-size:21.6px;color:#3a3a3a;">2023-11-24</div><div style="position:absolute;left:1021.0px;top:979.30px;width:50px;height:22px;border-radius:8px;background:#c3c447"></div><div class="t" style="left:1024.90px;top:975.73px;font-size:15.2px;color:#111;">admin</div><svg viewBox="0 0 512 512" width="21.6" height="21.6" style="position:absolute;left:1447.3px;top:977px">
<path fill="#404142" fill-rule="evenodd" d="M432 207L188.5 452.9c-10.4 10.4-23.3 18-37.4 22.2L30.8 510.5c-8.4 2.5-17.5 .2-23.7-6.1s-8.5-15.3-6.1-23.7L36.4 360.3c4.2-14.1 11.8-27 22.2-37.4L302 79Z M160 399.4l-9.1 22.7c-4 3.1-8.5 5.4-13.3 6.9L59.4 452l23-78.1c1.4-4.9 3.8-9.4 6.9-13.3l22.7-9.1v32c0 8.8 7.2 16 16 16h32z"/>
<path fill="#404142" fill-opacity="0.4" d="M362.7 18.7L302 79L432 207L492.6 148.6c25-25 25-65.5 0-90.5L453.3 18.7c-25-25-65.5-25-90.5 0z"/>
<path d="M328 166L152 332" stroke="#ffffff" stroke-opacity="0.55" stroke-width="30" stroke-linecap="butt"/>
</svg><svg viewBox="0 0 448 512" width="19.9" height="22.1" preserveAspectRatio="none" style="position:absolute;left:1479.6px;top:977px">
<path fill="#404142" d="M163.8 0H284.2c12.1 0 23.2 6.8 28.6 17.7L320 32h96c17.7 0 32 14.3 32 32s-14.3 32-32 32H32C14.3 96 0 81.7 0 64S14.3 32 32 32h96l7.2-14.3C140.6 6.8 151.7 0 163.8 0z"/>
<path fill="#404142" fill-opacity="0.4" d="M32 96H416L394.8 467c-1.6 25.3-22.6 45-47.9 45H101.1c-25.3 0-46.3-19.7-47.9-45L32 96z"/>
</svg><div style="position:absolute;left:0px;top:1011px;width:1516px;height:12px;background:#f3f7fa"></div></div></div>
</body></html>
